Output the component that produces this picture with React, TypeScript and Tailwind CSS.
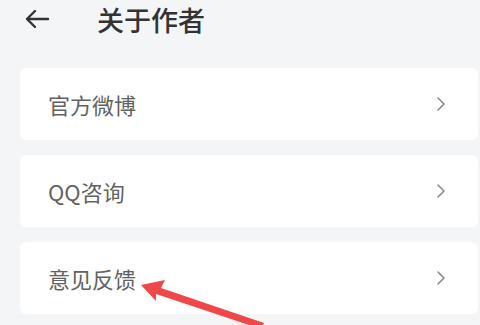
const ROWS = ['官方微博', 'QQ咨询', '意见反馈'];

function Chevron() {
  return (
    <svg width="10" height="16" viewBox="0 0 10 16" fill="none">
      <path d="M2 2l6 6-6 6" stroke="#8a8a8a" strokeWidth="1.6" strokeLinecap="round" strokeLinejoin="round" />
    </svg>
  );
}

export default function App() {
  return (
    <div
      className="relative w-[480px] h-[325px] overflow-hidden bg-[#f4f5f7]"
      style={{ fontFamily: '"Noto Sans CJK SC", "Noto Sans", sans-serif' }}
    >
      {/* Header */}
      <div className="flex items-center h-[38px]">
        <div className="w-[97px] pl-[24px] flex items-center">
          <svg width="26" height="20" viewBox="0 0 26 20" fill="none">
            <path d="M24 10H3M11 2L3 10l8 8" stroke="#333" strokeWidth="2.4" strokeLinecap="round" strokeLinejoin="round" />
          </svg>
        </div>
        <h1 className="text-[27px] leading-none text-[#333] font-medium">关于作者</h1>
      </div>

      {/* Rows */}
      <div className="mt-[30px] ml-[20px] mr-[2px] flex flex-col gap-[15px]">
        {ROWS.map((r) => (
          <div key={r} className="h-[72px] bg-white rounded-[6px] flex items-center justify-between pl-[28px] pr-[32px]">
            <span className="text-[22px] text-[#626262]">{r}</span>
            <Chevron />
          </div>
        ))}
      </div>

      {/* Red annotation arrow */}
      <svg className="absolute left-0 top-0" width="480" height="325" viewBox="0 0 480 325">
        <path d="M141 285 L165 280 L161 288 L264 323 L261 329 L156 294 L156 301 Z" fill="#f04848" />
      </svg>
    </div>
  );
}
